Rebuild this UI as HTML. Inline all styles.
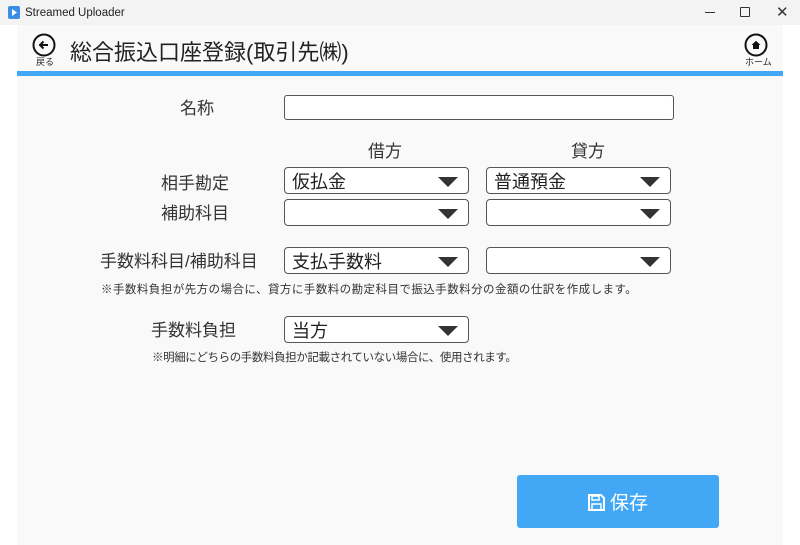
<!DOCTYPE html>
<html><head><meta charset="utf-8"><style>
*{margin:0;padding:0;box-sizing:border-box}
body{width:800px;height:545px;background:#fff;font-family:"Liberation Sans","Noto Sans CJK JP",sans-serif;position:relative;overflow:hidden;color:#222}
.tb{position:absolute;left:0;top:0;width:800px;height:25px;background:#f3f3f3}
.content{position:absolute;left:17px;top:25px;width:766px;height:520px;background:#f9f9f9}
.a{position:absolute}
.lbl{position:absolute;font-size:17px;color:#333;white-space:nowrap;line-height:20px}
.sel{position:absolute;height:27px;border:1px solid #555;border-radius:4px;background:#fff;font-size:18px;padding-left:7px;line-height:28px;color:#222}
.sel:after{content:"";position:absolute;right:10px;top:9px;border-left:10px solid transparent;border-right:10px solid transparent;border-top:10px solid #333}
.note{position:absolute;font-size:11.5px;color:#333;white-space:nowrap;line-height:14px}
</style></head><body>
<div class="tb">
<svg class="a" style="left:7px;top:5px" width="14" height="15"><rect x="1" y="1" width="12" height="13" rx="2" fill="#3a8ee6"/><path d="M5 4 L10 7.5 L5 11Z" fill="#fff"/></svg>
<div class="a" style="left:25px;top:6px;font-size:11.5px;line-height:14px;color:#222">Streamed Uploader</div>
<div class="a" style="left:705px;top:12px;width:10px;height:1px;background:#333"></div>
<div class="a" style="left:740px;top:7px;width:10px;height:10px;border:1px solid #333;border-radius:1px"></div>
<div class="a" style="left:776px;top:3px;font-size:15px;color:#333">✕</div>
</div>
<div class="content"></div>
<svg class="a" style="left:32px;top:33px" width="24" height="24"><circle cx="12" cy="12" r="10.5" fill="none" stroke="#111" stroke-width="2"/><path d="M16 12H8M11.5 8.5L8 12l3.5 3.5" fill="none" stroke="#111" stroke-width="2"/></svg>
<div class="a" style="left:36px;top:57px;font-size:9px;line-height:11px">戻る</div>
<div class="a" style="left:70px;top:40px;font-size:22px;line-height:26px;color:#222">総合振込口座登録(取引先㈱)</div>
<svg class="a" style="left:744px;top:33px" width="24" height="24"><circle cx="12" cy="12" r="10.5" fill="none" stroke="#111" stroke-width="2"/><path d="M7.5 12L12 7.8L16.5 12H15V16H9V12Z" fill="#111"/></svg>
<div class="a" style="left:745px;top:57px;font-size:9px;line-height:11px">ホーム</div>
<div class="a" style="left:17px;top:71px;width:766px;height:5px;background:#42a8f5"></div>

<div class="lbl" style="left:180px;top:99px">名称</div>
<div class="a" style="left:284px;top:95px;width:390px;height:25px;border:1px solid #555;border-radius:3px;background:#fff"></div>
<div class="lbl" style="left:368px;top:142px">借方</div>
<div class="lbl" style="left:571px;top:142px">貸方</div>

<div class="lbl" style="left:161px;top:174px">相手勘定</div>
<div class="sel" style="left:284px;top:167px;width:185px">仮払金</div>
<div class="sel" style="left:486px;top:167px;width:185px">普通預金</div>
<div class="lbl" style="left:161px;top:204px">補助科目</div>
<div class="sel" style="left:284px;top:199px;width:185px"></div>
<div class="sel" style="left:486px;top:199px;width:185px"></div>
<div class="lbl" style="left:100px;top:252px">手数料科目/補助科目</div>
<div class="sel" style="left:284px;top:247px;width:185px">支払手数料</div>
<div class="sel" style="left:486px;top:247px;width:185px"></div>
<div class="note" style="left:101px;top:283px;letter-spacing:0.45px">※手数料負担が先方の場合に、貸方に手数料の勘定科目で振込手数料分の金額の仕訳を作成します。</div>

<div class="lbl" style="left:151px;top:321px">手数料負担</div>
<div class="sel" style="left:284px;top:316px;width:185px">当方</div>
<div class="note" style="left:152px;top:351px;letter-spacing:-0.4px">※明細にどちらの手数料負担か記載されていない場合に、使用されます。</div>

<div class="a" style="left:517px;top:475px;width:202px;height:53px;background:#42a8f5;border-radius:3px"></div>
<svg class="a" style="left:587px;top:493px" width="19" height="19"><path d="M2 2H14L17 5V17H2Z" fill="none" stroke="#fff" stroke-width="2"/><rect x="5" y="3" width="7" height="4" fill="none" stroke="#fff" stroke-width="1.5"/><rect x="5" y="11" width="9" height="6" fill="none" stroke="#fff" stroke-width="1.5"/></svg>
<div class="a" style="left:610px;top:492px;font-size:19px;line-height:23px;color:#fff">保存</div>
</body></html>
